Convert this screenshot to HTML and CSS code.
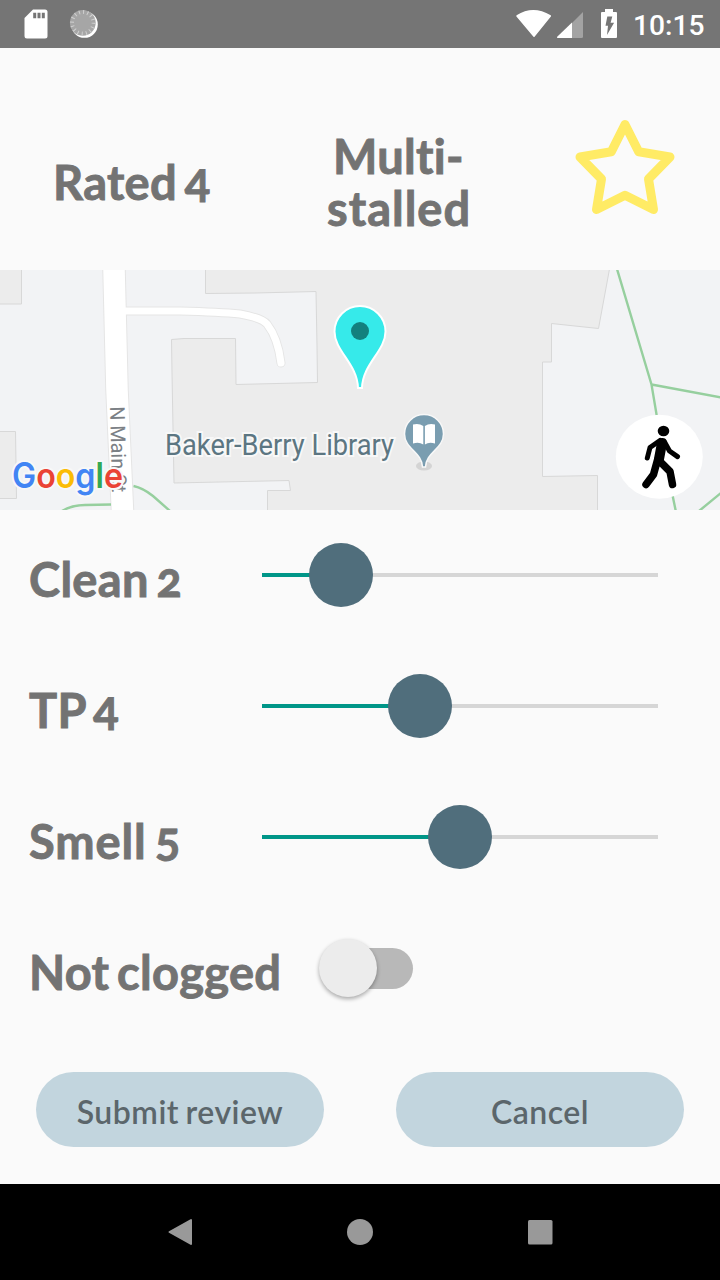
FILE: index.html
```html
<!DOCTYPE html>
<html lang="en">
<head>
<meta charset="utf-8">
<title>Review</title>
<link rel="stylesheet" href="styles.css">
</head>
<body>
<div class="screen">
  <header class="status">
    <svg class="status-left" width="120" height="48" viewBox="0 0 120 48">
      <path fill="#fff" d="M33 9.500h12a2.500 2.500 0 0 1 2.500 2.500v24a2.500 2.500 0 0 1-2.500 2.500H27a2.500 2.500 0 0 1-2.500-2.500V18z"/>
      <path stroke="#757575" stroke-width="3" d="M34.700 12.700v5.500M39 12.700v5.500M43.300 12.700v5.500"/>
      <circle cx="84.500" cy="24.500" r="13.300" fill="#fff"/>
      <circle cx="82.800" cy="22.800" r="12.900" fill="#a6a6a6"/>
      <circle cx="82.800" cy="22.800" r="10.800" fill="none" stroke="#d0d0d0" stroke-width="4" stroke-dasharray="1 3.240"/>
    </svg>
    <svg class="status-right" width="110" height="48" viewBox="510 0 110 48">
      <path fill="#fff" stroke="#fff" stroke-width="1.500" stroke-linejoin="round" d="M517 16Q533 5.500 550.300 16L534 36.200z"/>
      <path fill="#a3a3a3" d="M583 12v24.500q0 1.500-1.500 1.500H572V23z"/>
      <path fill="#fff" d="M572 22.500V38H557.500q-1-.5-.3-1.300z"/>
      <path fill="#fff" d="M605 9h8v3h3q1 0 1 1v24q0 1-1 1h-14q-1 0-1-1V13q0-1 1-1h3z"/>
      <path fill="#757575" d="M607.300 16.500h5l-1.700 6.200h3.500L607 35l1-9.300h-2.500z"/>
    </svg>
    <span class="clock">10:15</span>
  </header>

  <section class="summary">
    <div class="rated"><span class="t-rated">Rated <b>4</b></span></div>
    <div class="kind"><span class="t-multi">Multi-</span><span class="t-stalled">stalled</span></div>
    <svg class="star" width="104" height="104" viewBox="573 116 104 104">
      <path fill="none" stroke="#ffeb65" stroke-width="9" stroke-linejoin="round" d="M625 124.500L638.700 151.800 670 157 648.500 179 653.500 209.500 625 195.300 596.500 209.500 601.500 179 580 157 611.300 151.800z"/>
    </svg>
  </section>

  <svg class="map" width="720" height="240" viewBox="0 270 720 240">
    <rect y="270" width="720" height="240" fill="#f2f3f5"/>
    <g fill="#ececec" stroke="#d8d8d8" stroke-width="1">
      <path d="M-1 269H21.500V304H-1zM-1 431.500H15.500L16.500 498.500H-1z"/>
      <path d="M205.500 269V293.500L255 293 316 291.500 317 346 317.500 382.500 236 384.500 235.500 338.500 184 338.500 171.500 339.500 172 373 174 483 289 480.500 290.500 490.500H267.500V511H597.500V475.500L542.500 476.500V362H551.500V323.500L598.500 328.500 609.500 269z"/>
    </g>
    <g fill="none" stroke-linecap="round">
      <path stroke="#e5e5e5" stroke-width="9" d="M124 311H180Q220 312 240 314 262 318 267 324 278 338 281 363"/>
      <path stroke="#e5e5e5" stroke-width="23.500" stroke-linecap="butt" d="M114 269L117 390 122.500 511"/>
      <path stroke="#fff" stroke-width="7.200" d="M122 311H180Q220 312 240 314 262 318 267 324 278 338 281 363"/>
      <path stroke="#fff" stroke-width="21.500" stroke-linecap="butt" d="M114 269L117 390 122.500 511"/>
    </g>
    <g fill="none" stroke="#96cf9e" stroke-width="2.400">
      <path d="M617 269L651.500 384.500 660 435 676 512M651.500 384.500L721 397.500M699 511L721 493"/>
      <path d="M62 511Q72 505 85 505L111 504.500M133.500 486Q143 488 153 496L170 511"/>
    </g>
    <text class="street" transform="translate(110 406.500) rotate(88.500)" textLength="86" lengthAdjust="spacingAndGlyphs">N Main St</text>
    <text class="place" x="165" y="455" textLength="229" lengthAdjust="spacingAndGlyphs">Baker-Berry Library</text>
    <g class="google">
      <text x="12" y="488" textLength="111" lengthAdjust="spacingAndGlyphs"><tspan fill="#4285f4">G</tspan><tspan fill="#ea4335">o</tspan><tspan fill="#fbbc05">o</tspan><tspan fill="#4285f4">g</tspan><tspan fill="#34a853">l</tspan><tspan fill="#ea4335">e</tspan></text>
    </g>
    <path fill="#36eaea" stroke="#fff" stroke-width="2" d="M360 306a25.500 25.500 0 0 1 25.500 25.500C385.500 351 362.500 364 362 388H358C357.500 364 334.500 351 334.500 331.500A25.500 25.500 0 0 1 360 306z"/>
    <circle cx="360" cy="331" r="9" fill="#13807e"/>
    <ellipse cx="424" cy="466" rx="8" ry="4.500" fill="#d4d4d4"/>
    <path fill="#7a9db0" stroke="#f8f8f8" stroke-width="1.500" d="M424 414.500a19.500 19.500 0 0 1 19.500 19.500C443.500 449 426 452 425.500 467H422.500C422 452 404.500 449 404.500 434A19.500 19.500 0 0 1 424 414.500z"/>
    <path fill="#fff" d="M413 424.500Q419 423 423.300 426V444.500Q419 441.500 413 443.500zM424.900 426Q429 423 435 424.500V443.500Q429 441.500 424.900 444.500z"/>
    <ellipse cx="659.300" cy="456.800" rx="43.500" ry="42" fill="#fff"/>
    <ellipse cx="663.500" cy="431" rx="5.800" ry="5.300"/>
    <g fill="none" stroke="#000" stroke-linecap="round" stroke-linejoin="round">
      <path stroke-width="10" d="M662 443L659 459"/>
      <path stroke-width="5" d="M660 440.500L650 447.500 647.300 458M664 441L669.500 451 677.500 456.600"/>
      <path stroke-width="7.500" d="M657.500 460L653.500 474.500 646 484.500M659.500 461L670 471.500 672.500 484.500"/>
    </g>
  </svg>

  <section class="form">
    <div class="row"><div class="label"><span class="t-clean">Clean 2</span></div><div class="slider"><div class="fill" style="width:20%"></div><div class="thumb"></div></div></div>
    <div class="row"><div class="label"><span class="t-tp">TP <b>4</b></span></div><div class="slider"><div class="fill" style="width:40%"></div><div class="thumb"></div></div></div>
    <div class="row"><div class="label"><span class="t-smell">Smell <b>5</b></span></div><div class="slider"><div class="fill" style="width:50%"></div><div class="thumb"></div></div></div>
    <div class="row"><div class="label wide"><span class="t-clog">Not clogged</span></div><div class="switch"><div class="knob"></div></div></div>
  </section>

  <div class="actions">
    <div class="button"><span class="t-submit">Submit review</span></div>
    <div class="button"><span class="t-cancel">Cancel</span></div>
  </div>

  <nav class="nav">
    <svg width="26" height="28" viewBox="167 1218 26 28"><path fill="#999" stroke="#999" stroke-width="2" stroke-linejoin="round" d="M191 1220V1244L169.500 1232z"/></svg>
    <svg width="26" height="28" viewBox="347 1218 26 28"><circle cx="360" cy="1232" r="13" fill="#999"/></svg>
    <svg width="26" height="28" viewBox="527 1218 26 28"><rect x="528" y="1220" width="24.500" height="24.500" rx="1.500" fill="#999"/></svg>
  </nav>
</div>
</body>
</html>
```
FILE: styles.css
```css
* { box-sizing: border-box; }
body { margin: 0; background: #fafafa; }
svg { display: block; }

.screen {
  width: 720px;
  height: 1280px;
  display: flex;
  flex-direction: column;
  overflow: hidden;
  background: #fafafa;
  color: #737373;
  font: 700 47px/52px Lato, sans-serif;
  font-variant-numeric: oldstyle-nums;
  font-variant-ligatures: none;
  letter-spacing: .3px;
  word-spacing: -4px;
  white-space: nowrap;
}

.status { height: 48px; display: flex; background: #757575; }
.status-left { margin-right: auto; }
.status-right { margin-right: 13px; }
.clock {
  width: 87px;
  color: #fff;
  font: 500 28.200px/51px Roboto, sans-serif;
  letter-spacing: 0;
}

.summary { height: 222px; display: flex; }
.summary span, .label span { display: block; width: max-content; -webkit-text-stroke: .9px #737373; }
.summary b, .label b { display: inline-block; font-weight: inherit; line-height: 1; transform: translateY(-3px); }
.rated { width: 270px; padding: 108px 0 0 53px; }
.kind { width: 303px; padding: 82px 0 0 57px; }
.t-multi { margin-left: 6px; }
.kind .t-stalled { letter-spacing: 1px; }
.label .t-smell { letter-spacing: .9px; }
.star { margin-top: 68px; }

.map { letter-spacing: 0; word-spacing: 0; }
.street { font: 20.500px Roboto, sans-serif; fill: #7b8085; stroke: #fff; stroke-width: 2px; paint-order: stroke; }
.place { font: 29px Roboto, sans-serif; fill: #5c7682; stroke: #f8f8f8; stroke-width: 4px; paint-order: stroke; }
.google { font: 600 35px Inter, sans-serif; stroke: #f8f8f8; stroke-width: 4px; paint-order: stroke; }

.form { height: 524px; }
.row { height: 131px; display: flex; }
.label { width: 262px; padding: 43px 0 0 29px; }
.label.wide { width: 326px; }
.slider {
  width: 396px;
  height: 4px;
  margin-top: 63px;
  display: flex;
  align-items: center;
  background: #d6d6d6;
}
.fill { height: 4px; background: #009688; }
.thumb { width: 64px; height: 64px; margin-left: -32px; border-radius: 50%; background: #506e7c; flex: none; }
.switch { width: 87px; height: 41px; margin-top: 45px; border-radius: 21px; background: #b8b8b8; }
.knob {
  width: 58px;
  height: 58px;
  margin: -9px 0 0 -7px;
  border-radius: 50%;
  background: #ececec;
  box-shadow: 0 2px 4px #0005;
}

.actions { height: 150px; padding: 38px 36px 0; display: flex; gap: 72px; }
.button {
  width: 288px;
  height: 75px;
  border-radius: 38px;
  display: flex;
  justify-content: center;
  background: #c2d5de;
  color: #5b666b;
  font-size: 32px;
  line-height: 79px;
  font-weight: 600;
  letter-spacing: .5px;
  word-spacing: -2px;
}

.nav { height: 96px; padding: 34px 167px 0; display: flex; justify-content: space-between; background: #000; }
```
